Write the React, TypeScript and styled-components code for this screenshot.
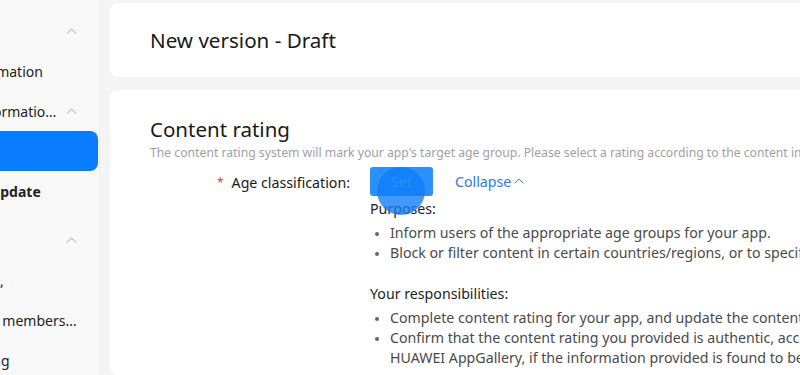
import styled, { createGlobalStyle } from "styled-components";

const GlobalStyle = createGlobalStyle`
  html, body {
    margin: 0;
    padding: 0;
    overflow: hidden;
  }
  body {
    font-family: "Noto Sans", "Open Sans", sans-serif;
    color: #191919;
  }
  * {
    box-sizing: border-box;
  }
`;

const Page = styled.div`
  width: 800px;
  height: 375px;
  display: flex;
  overflow: hidden;
  background: #f4f4f4;
`;

const Sidebar = styled.aside`
  flex: 0 0 100px;
  height: 100%;
  overflow: hidden;
  background: #f8f8f8;
  border-right: 1px solid #efefef;
`;

const SideInner = styled.nav`
  width: 200px;
  margin-left: -101px;
  padding-top: 11px;
`;

const Group = styled.div`
  & + & {
    margin-top: 9px;
  }
`;

const Item = styled.div<{ $header?: boolean; $active?: boolean; $bold?: boolean }>`
  height: 40px;
  display: flex;
  align-items: center;
  gap: 8px;
  margin-right: 1px;
  padding: 0 21px 0 ${(p) => (p.$header ? "24px" : "36px")};
  font-size: 14px;
  font-weight: ${(p) => (p.$bold ? 700 : 400)};
  color: ${(p) => (p.$active ? "#fff" : "#222")};
  background: ${(p) => (p.$active ? "#0a7cff" : "transparent")};
  border-radius: 8px;
  white-space: nowrap;
`;

const ItemText = styled.span`
  flex: 1;
  min-width: 0;
  overflow: hidden;
  text-overflow: ellipsis;
`;

const Chevron = ({ color = "#c4c4c4", size = 11 }: { color?: string; size?: number }) => (
  <svg width={size} height={size * 0.6} viewBox="0 0 12 7" fill="none">
    <path d="M1 6 L6 1 L11 6" stroke={color} strokeWidth="1.2" strokeLinecap="round" strokeLinejoin="round" />
  </svg>
);

const Main = styled.main`
  flex: 1;
  min-width: 0;
  padding: 3px 0 0 10px;
  display: flex;
  flex-direction: column;
  gap: 13px;
`;

const Card = styled.section`
  background: #fff;
  border-radius: 8px 0 0 8px;
  width: 760px;
`;

const HeaderCard = styled(Card)`
  height: 74px;
  display: flex;
  align-items: center;
  padding-left: 40px;
`;

const PageTitle = styled.h1`
  margin: 0;
  font-size: 20.6px;
  font-weight: 400;
  color: #191919;
`;

const ContentCard = styled(Card)`
  flex: 1;
  padding: 24px 0 0 40px;
`;

const SectionTitle = styled.h2`
  margin: 0;
  font-size: 20.5px;
  line-height: 30px;
  font-weight: 400;
  color: #191919;
`;

const Hint = styled.p`
  margin: 0;
  font-size: 12.2px;
  line-height: 18px;
  color: #a0a0a0;
  white-space: nowrap;
`;

const FormRow = styled.div`
  display: flex;
  margin-top: 4px;
`;

const Label = styled.div`
  flex: 0 0 220px;
  height: 30px;
  display: flex;
  align-items: center;
  justify-content: flex-end;
  padding: 2px 20px 0 0;
  font-size: 14.2px;
  color: #191919;
`;

const Required = styled.span`
  color: #e84026;
  font-size: 12px;
  margin-right: 8px;
`;

const Control = styled.div`
  flex: 1;
  min-width: 0;
`;

const Actions = styled.div`
  display: flex;
  align-items: center;
  gap: 22px;
  height: 30px;
`;

const ButtonWrap = styled.div`
  position: relative;
`;

const SetButton = styled.button`
  width: 63px;
  height: 29px;
  border: none;
  border-radius: 3px;
  background: #2b91f9;
  color: #8fc6ff;
  font-family: inherit;
  font-size: 14px;
  padding: 0;
`;

const TouchRipple = styled.span`
  position: absolute;
  left: 7px;
  top: 0;
  width: 48px;
  height: 48px;
  border-radius: 50%;
  background: rgba(14, 124, 250, 0.78);
  pointer-events: none;
`;

const LinkButton = styled.a`
  display: flex;
  align-items: center;
  gap: 3px;
  color: #2f7bd6;
  font-size: 14.2px;
  text-decoration: none;
`;

const InfoBlock = styled.div`
  margin-top: 3px;
  font-size: 14.2px;
  line-height: 20px;
  white-space: nowrap;
`;

const InfoTitle = styled.div<{ $spaced?: boolean }>`
  color: #222;
  margin-top: ${(p) => (p.$spaced ? "21px" : "0")};
`;

const Bullets = styled.ul`
  margin: 4px 0 0;
  padding-left: 20px;
  color: #4a4a4a;
  li::marker {
    font-size: 11px;
    color: #666;
  }
`;

const Continuation = styled.div`
  padding-left: 20px;
  color: #4a4a4a;
`;

export default function App() {
  return (
    <>
      <GlobalStyle />
      <Page>
        <Sidebar>
          <SideInner>
            <Group>
              <Item $header>
                <ItemText>Details</ItemText>
                <Chevron />
              </Item>
              <Item>
                <ItemText>App information</ItemText>
              </Item>
            </Group>
            <Group style={{ marginTop: 0 }}>
              <Item $header>
                <ItemText>Version information and compliance</ItemText>
                <Chevron />
              </Item>
              <Item $active>
                <ItemText>Draft</ItemText>
              </Item>
              <Item $bold>
                <ItemText>Version update</ItemText>
              </Item>
            </Group>
            <Group>
              <Item $header>
                <ItemText>Operate</ItemText>
                <Chevron />
              </Item>
              <Item>
                <ItemText>Comment,</ItemText>
              </Item>
              <Item>
                <ItemText>Add team members and roles</ItemText>
              </Item>
              <Item>
                <ItemText>Advertising</ItemText>
              </Item>
            </Group>
          </SideInner>
        </Sidebar>
        <Main>
          <HeaderCard>
            <PageTitle>New version - Draft</PageTitle>
          </HeaderCard>
          <ContentCard>
            <SectionTitle>Content rating</SectionTitle>
            <Hint>
              The content rating system will mark your app's target age group. Please select a rating according to the content in your app.
            </Hint>
            <FormRow>
              <Label>
                <Required>*</Required>Age classification:
              </Label>
              <Control>
                <Actions>
                  <ButtonWrap>
                    <SetButton>Set</SetButton>
                    <TouchRipple />
                  </ButtonWrap>
                  <LinkButton>
                    Collapse
                    <Chevron color="#2f7bd6" size={10} />
                  </LinkButton>
                </Actions>
                <InfoBlock>
                  <InfoTitle>Purposes:</InfoTitle>
                  <Bullets>
                    <li>Inform users of the appropriate age groups for your app.</li>
                    <li>Block or filter content in certain countries/regions, or to specific users.</li>
                  </Bullets>
                  <InfoTitle $spaced>Your responsibilities:</InfoTitle>
                  <Bullets>
                    <li>Complete content rating for your app, and update the content rating when needed.</li>
                    <li>Confirm that the content rating you provided is authentic, accurate, and complete.</li>
                  </Bullets>
                  <Continuation>
                    HUAWEI AppGallery, if the information provided is found to be inaccurate.
                  </Continuation>
                </InfoBlock>
              </Control>
            </FormRow>
          </ContentCard>
        </Main>
      </Page>
    </>
  );
}
